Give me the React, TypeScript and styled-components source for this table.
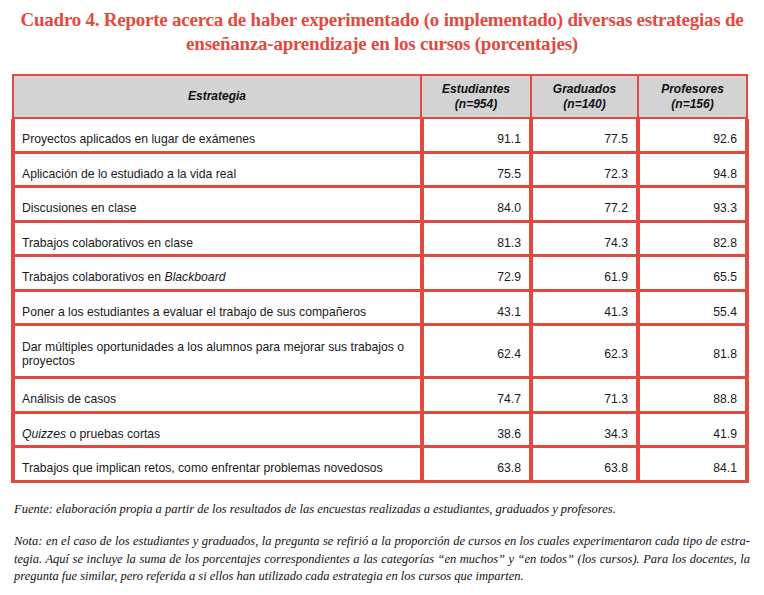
import React from 'react';
import styled, { createGlobalStyle } from 'styled-components';

const RED = '#e24a40';
const GRAY = '#d3d3d4';

const Global = createGlobalStyle`
  html, body { margin: 0; padding: 0; background: #ffffff; }
  body { font-family: "Liberation Sans", Arial, sans-serif; color: #111; }
`;

const Page = styled.div`
  width: 764px;
  padding-top: 8px;
  box-sizing: border-box;
`;

const Title = styled.h1`
  margin: 0;
  font-family: "Liberation Serif", "Times New Roman", serif;
  font-weight: bold;
  font-size: 19px;
  line-height: 24px;
  letter-spacing: -0.24px;
  color: ${RED};
  text-align: center;
`;

const Table = styled.div`
  margin-top: 18px;
  display: flex;
  flex-direction: column;
`;

const HeaderGrid = styled.div`
  margin: 0 16px 0 12px;
  display: grid;
  grid-template-columns: 406px 108px 105px 107px;
  column-gap: 2px;
  padding: 2px;
  background: ${RED};
  height: 45px;
  box-sizing: border-box;
`;

const HeadCell = styled.div`
  background: ${GRAY};
  display: flex;
  align-items: center;
  justify-content: center;
  text-align: center;
  font-weight: bold;
  font-style: italic;
  font-size: 12px;
  line-height: 15px;
  color: #111;
`;

const BodyGrid = styled.div`
  margin: 0 15px 0 11px;
  display: grid;
  grid-template-columns: 405px 105px 103px 105px;
  column-gap: 4px;
  row-gap: 3px;
  padding: 0 4px 3px 4px;
  background: ${RED};
`;

const Cell = styled.div<{ $num?: boolean; $tall?: boolean }>`
  background: #ffffff;
  height: ${(p) => (p.$tall ? '50px' : '31.5px')};
  box-sizing: border-box;
  display: flex;
  align-items: center;
  justify-content: ${(p) => (p.$num ? 'flex-end' : 'flex-start')};
  padding: ${(p) => (p.$tall ? '6px' : '9px')} ${(p) => (p.$num ? '8px' : '6px')} 0 ${(p) => (p.$num ? '6px' : '7px')};
  font-size: 12.2px;
  line-height: 14.4px;
  color: #1a1a1a;
`;

const Footer = styled.div`
  margin: 18px 14px 0 14px;
  font-family: "Liberation Serif", "Times New Roman", serif;
  font-style: italic;
  font-size: 12.5px;
  line-height: 17.5px;
  color: #111;
`;

const Para = styled.p`
  margin: 0 0 15px 0;
`;

const Line = styled.span<{ $justify?: boolean }>`
  display: block;
  text-align: ${(p) => (p.$justify ? 'justify' : 'left')};
  text-align-last: ${(p) => (p.$justify ? 'justify' : 'left')};
`;

type Row = { label: React.ReactNode; v: [string, string, string]; tall?: boolean };

const rows: Row[] = [
  { label: 'Proyectos aplicados en lugar de exámenes', v: ['91.1', '77.5', '92.6'] },
  { label: 'Aplicación de lo estudiado a la vida real', v: ['75.5', '72.3', '94.8'] },
  { label: 'Discusiones en clase', v: ['84.0', '77.2', '93.3'] },
  { label: 'Trabajos colaborativos en clase', v: ['81.3', '74.3', '82.8'] },
  {
    label: (
      <span>
        Trabajos colaborativos en <i>Blackboard</i>
      </span>
    ),
    v: ['72.9', '61.9', '65.5'],
  },
  { label: 'Poner a los estudiantes a evaluar el trabajo de sus compañeros', v: ['43.1', '41.3', '55.4'] },
  {
    label: 'Dar múltiples oportunidades a los alumnos para mejorar sus trabajos o proyectos',
    v: ['62.4', '62.3', '81.8'],
    tall: true,
  },
  { label: 'Análisis de casos', v: ['74.7', '71.3', '88.8'] },
  {
    label: (
      <span>
        <i>Quizzes</i> o pruebas cortas
      </span>
    ),
    v: ['38.6', '34.3', '41.9'],
  },
  { label: 'Trabajos que implican retos, como enfrentar problemas novedosos', v: ['63.8', '63.8', '84.1'] },
];

export default function App() {
  return (
    <>
      <Global />
      <Page>
        <Title>
          Cuadro 4. Reporte acerca de haber experimentado (o implementado) diversas estrategias de
          <br />
          enseñanza-aprendizaje en los cursos (porcentajes)
        </Title>
        <Table>
          <HeaderGrid>
            <HeadCell>Estrategia</HeadCell>
            <HeadCell>
              Estudiantes
              <br />
              (n=954)
            </HeadCell>
            <HeadCell>
              Graduados
              <br />
              (n=140)
            </HeadCell>
            <HeadCell>
              Profesores
              <br />
              (n=156)
            </HeadCell>
          </HeaderGrid>
          <BodyGrid>
            {rows.map((r, i) => (
              <React.Fragment key={i}>
                <Cell $tall={r.tall}>{r.label}</Cell>
                {r.v.map((n, j) => (
                  <Cell key={j} $num $tall={r.tall}>
                    {n}
                  </Cell>
                ))}
              </React.Fragment>
            ))}
          </BodyGrid>
        </Table>
        <Footer>
          <Para>
            Fuente: elaboración propia a partir de los resultados de las encuestas realizadas a estudiantes, graduados y profesores.
          </Para>
          <Para>
            <Line $justify>
              Nota: en el caso de los estudiantes y graduados, la pregunta se refirió a la proporción de cursos en los cuales experimentaron cada tipo de estra-
            </Line>
            <Line $justify>
              tegia. Aquí se incluye la suma de los porcentajes correspondientes a las categorías “en muchos” y “en todos” (los cursos). Para los docentes, la
            </Line>
            <Line>pregunta fue similar, pero referida a si ellos han utilizado cada estrategia en los cursos que imparten.</Line>
          </Para>
        </Footer>
      </Page>
    </>
  );
}
